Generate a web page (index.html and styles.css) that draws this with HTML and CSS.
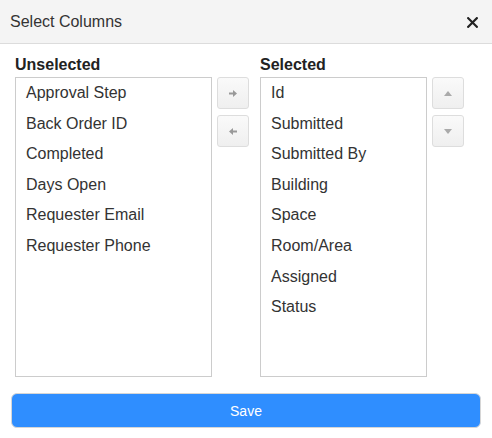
FILE: index.html
```html
<!DOCTYPE html>
<html lang="en">
<head>
    <meta charset="UTF-8">
    <meta name="viewport" content="width=device-width, initial-scale=1.0">
    <title>Select Columns</title>
    <link rel="stylesheet" href="styles.css">
</head>
<body>
    <div class="dialog">
        <div class="dialog-head">
            <h1>Select Columns</h1>
            <button class="close" type="button" aria-label="Close">
                <svg width="11" height="11" viewBox="0 0 11 11">
                    <path d="M1.2 1.2 L9.8 9.8 M9.8 1.2 L1.2 9.8" stroke="#222" stroke-width="2.2" stroke-linecap="square"/>
                </svg>
            </button>
        </div>
        <div class="dialog-body">
            <div class="picker">
                <div class="col col-left">
                    <h2>Unselected</h2>
                    <ul class="list">
                        <li>Approval Step</li>
                        <li>Back Order ID</li>
                        <li>Completed</li>
                        <li>Days Open</li>
                        <li>Requester Email</li>
                        <li>Requester Phone</li>
                    </ul>
                </div>
                <div class="moves moves-lr">
                    <button class="tool" type="button" aria-label="Add">
                        <svg width="8" height="7" viewBox="0 0 8 7"><path d="M0 2.5 H4 V0 L8 3.5 L4 7 V4.5 H0 Z" fill="#999"/></svg>
                    </button>
                    <button class="tool" type="button" aria-label="Remove">
                        <svg width="8" height="7" viewBox="0 0 8 7"><path d="M8 2.5 H4 V0 L0 3.5 L4 7 V4.5 H8 Z" fill="#999"/></svg>
                    </button>
                </div>
                <div class="col col-right">
                    <h2>Selected</h2>
                    <ul class="list">
                        <li>Id</li>
                        <li>Submitted</li>
                        <li>Submitted By</li>
                        <li>Building</li>
                        <li>Space</li>
                        <li>Room/Area</li>
                        <li>Assigned</li>
                        <li>Status</li>
                    </ul>
                </div>
                <div class="moves moves-ud">
                    <button class="tool" type="button" aria-label="Move up">
                        <svg width="8" height="5" viewBox="0 0 8 5"><path d="M0 5 L4 0 L8 5 Z" fill="#aaa"/></svg>
                    </button>
                    <button class="tool" type="button" aria-label="Move down">
                        <svg width="8" height="5" viewBox="0 0 8 5"><path d="M0 0 L8 0 L4 5 Z" fill="#aaa"/></svg>
                    </button>
                </div>
            </div>
            <button class="save" type="button">Save</button>
        </div>
    </div>
</body>
</html>
```

FILE: styles.css
```css
html, body {
    margin: 0;
    padding: 0;
    background: #fff;
    font-family: "Liberation Sans", Arial, sans-serif;
    color: #333;
}
.dialog {
    width: 492px;
}
.dialog-head {
    display: flex;
    align-items: center;
    justify-content: space-between;
    height: 43px;
    padding: 0 14px 0 10px;
    background: #f4f4f4;
    border-bottom: 1px solid #dcdcdc;
}
.dialog-head h1 {
    margin: 0;
    font-size: 16px;
    font-weight: normal;
    line-height: 20px;
    color: #333;
}
.close {
    display: flex;
    padding: 0;
    border: 0;
    background: none;
    margin-top: 1px;
}
.dialog-body {
    padding: 11px 11px 0;
}
.picker {
    display: flex;
    align-items: flex-start;
    padding-left: 4px;
}
.col h2 {
    margin: 0 0 2px;
    font-size: 16px;
    line-height: 20px;
    font-weight: bold;
    color: #222;
}
.list {
    list-style: none;
    margin: 0;
    padding: 0;
    height: 298px;
    border: 1px solid #ccc;
}
.col-left .list {
    width: 195px;
}
.col-right .list {
    width: 165px;
}
.list li {
    padding: 5px 10px;
    font-size: 16px;
    line-height: 20.6px;
    white-space: nowrap;
}
.moves {
    display: flex;
    flex-direction: column;
    gap: 6px;
    padding-top: 22px;
}
.moves-lr {
    margin: 0 11px 0 5px;
}
.moves-ud {
    margin-left: 5px;
}
.tool {
    display: flex;
    align-items: center;
    justify-content: center;
    width: 32px;
    height: 32px;
    padding: 0;
    border: 1px solid #ddd;
    border-radius: 3px;
    background: linear-gradient(#fafafa, #efefef);
}
.save {
    display: block;
    width: 470px;
    height: 35px;
    margin-top: 16px;
    border: 1px solid #d6d6d6;
    border-radius: 6px;
    background: #2f8eff;
    color: #fff;
    font-family: "Liberation Sans", Arial, sans-serif;
    font-size: 14px;
}
```
